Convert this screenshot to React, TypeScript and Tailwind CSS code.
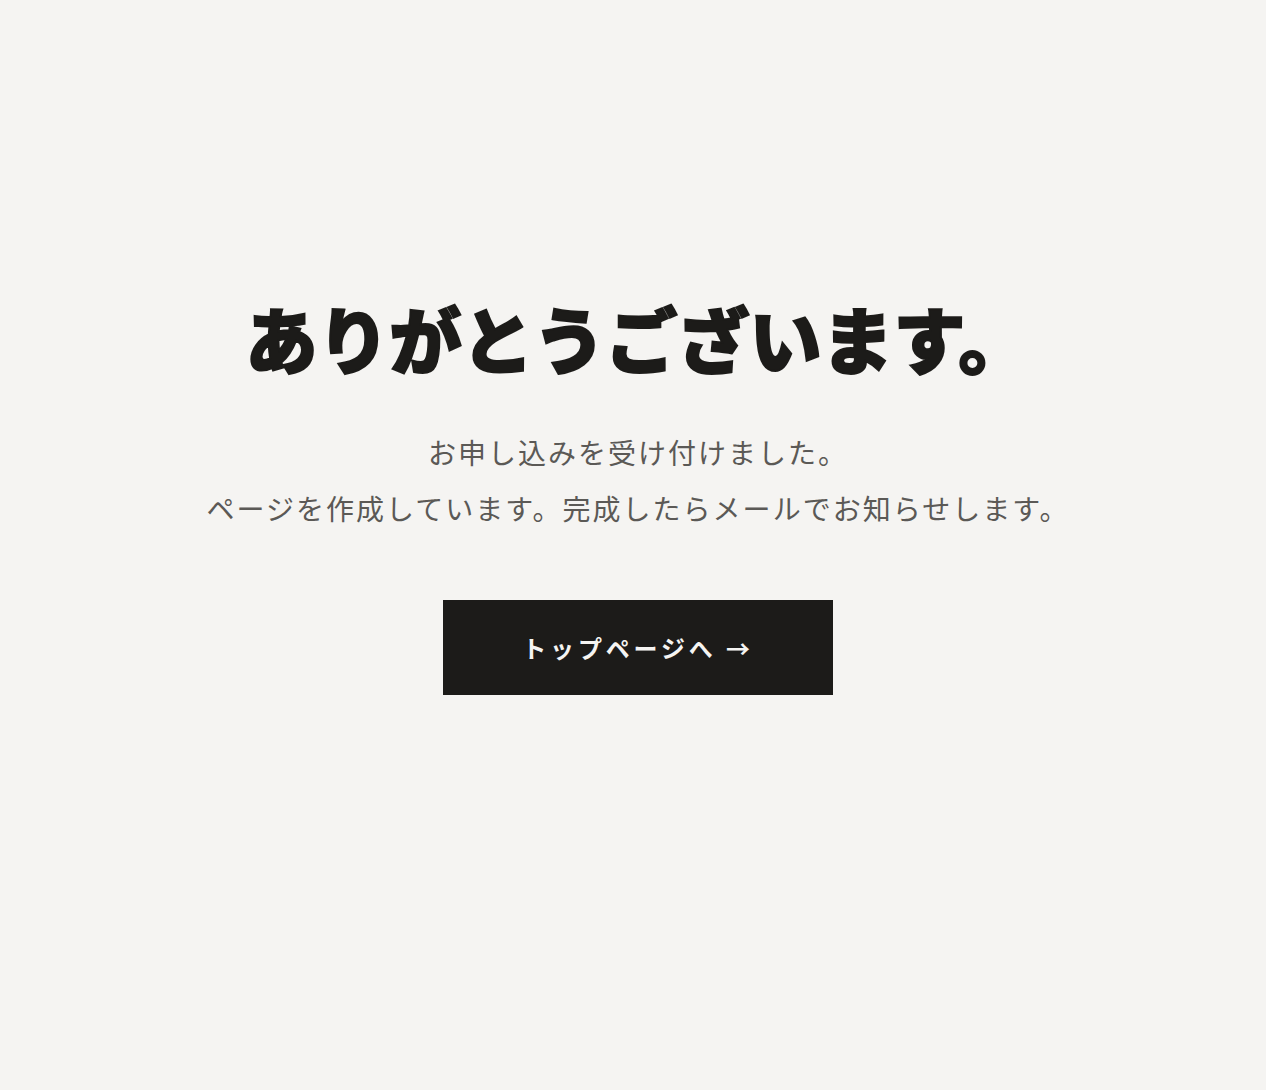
export default function App() {
  return (
    <div className="min-h-screen w-full bg-[#f5f4f2] font-['Noto_Sans_CJK_JP','Noto_Sans',sans-serif]">
      <main className="flex flex-col items-center pl-[34px] pr-6 pt-[294px] pb-24 text-center">
        <h1 className="text-[72px] font-black leading-[1.2] text-[#1c1b19] [-webkit-text-stroke:2px_#1c1b19]">
          ありがとうございます。
        </h1>
        <div className="mt-[44px] text-[28px] leading-[2] tracking-[0.072em] text-[#5b5956]">
          <p>お申し込みを受け付けました。</p>
          <p>ページを作成しています。完成したらメールでお知らせします。</p>
        </div>
        <a
          href="#"
          className="mt-[64px] flex h-[95px] w-[390px] items-center justify-center bg-[#1c1b19] text-[24px] font-bold tracking-[0.16em] text-[#f5f4f2]"
        >
          トップページへ →
        </a>
      </main>
    </div>
  )
}
